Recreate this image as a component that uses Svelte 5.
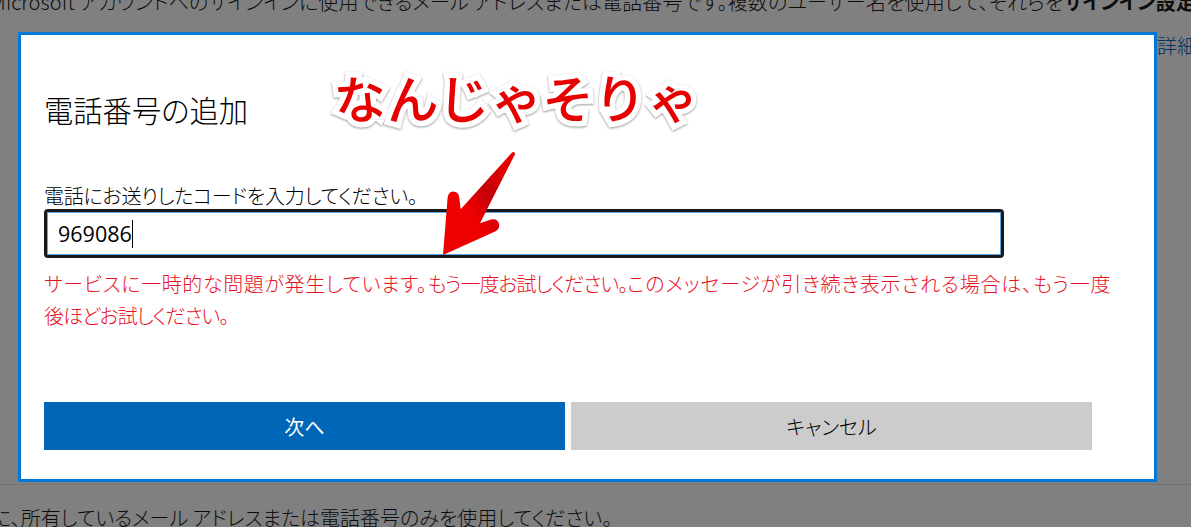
<script>
	const stickerChars = [
		{ ch: 'な', rot: -4 },
		{ ch: 'ん', rot: -3 },
		{ ch: 'じ', rot: 2 },
		{ ch: 'ゃ', rot: -8 },
		{ ch: 'そ', rot: -4 },
		{ ch: 'り', rot: 3 },
		{ ch: 'ゃ', rot: -12 }
	];
</script>

<div class="page">
	<p class="top-line">Microsoft アカウントへのサインインに使用できるメール アドレスまたは電話番号です。複数のユーザー名を使用して、それらを<b>サインイン設定</b></p>
	<div class="middle">
		<div class="dialog">
			<h2>電話番号の追加</h2>
			<label class="field-label" for="code">電話にお送りしたコードを入力してください。</label>
			<div class="input" id="code">969086<span class="caret"></span></div>
			<p class="error"><span class="loose">サービスに一時的な問題が発生しています。</span><span class="tight">もう一度お試しください。</span><span class="wide">このメッセージが引き続き表示される場合は、もう一度</span><span class="tight">後ほどお試しください。</span></p>
			<div class="actions">
				<button class="primary">次へ</button>
				<button class="secondary">キャンセル</button>
			</div>
		</div>
		<a class="more" href="#more">詳細</a>
	</div>
	<p class="bottom-line">に、所有しているメール アドレスまたは電話番号のみを使用してください。</p>

	<div class="sticker">
		{#each stickerChars as c}
			<span style="transform: rotate({c.rot}deg)">{c.ch}</span>
		{/each}
	</div>

	<svg class="arrow" width="90" height="120" viewBox="430 145 90 120">
		<defs>
			<linearGradient id="arrowfill" x1="0" y1="1" x2="1" y2="0">
				<stop offset="0.4" stop-color="#ee0000" />
				<stop offset="0.62" stop-color="#c4000a" />
				<stop offset="0.85" stop-color="#e60000" />
			</linearGradient>
		</defs>
		<path d="M443 255 L447.5 199 Q448 191.5 453 191.5 Q459 191.5 459.3 198 L460.7 209.3 L511.5 153 Q514 151 515 153.5 Q515 155 514 156 L480 223.3 L491 219.6 Q498 218 499.3 225 Q499.5 230 494 232 Z" fill="url(#arrowfill)" />
	</svg>
</div>

<style>
	:global(body) {
		margin: 0;
		background: #808080;
	}

	.page {
		position: relative;
		height: 527px;
		width: 1191px;
		overflow: hidden;
		background: #808080;
		font-family: "Noto Sans CJK JP", sans-serif;
		font-feature-settings: "palt";
		font-weight: 300;
		color: #000;
	}

	.top-line {
		margin: -13px 0 0 -10px;
		height: 45px;
		font-size: 20px;
		line-height: 30px;
		letter-spacing: 0.15px;
		white-space: nowrap;
		color: #0c0c0c;
	}
	.top-line b {
		font-weight: 700;
	}

	.middle {
		display: flex;
		align-items: flex-start;
		height: 450px;
		margin-left: 18px;
	}

	.dialog {
		box-sizing: border-box;
		width: 1139px;
		height: 450px;
		flex: none;
		background: #fff;
		border: 3px solid #0078d7;
		padding: 56px 23px 0;
		display: flex;
		flex-direction: column;
		align-items: flex-start;
	}

	h2 {
		margin: 0;
		font-size: 29.3px;
		font-weight: 300;
		line-height: 36px;
	}

	.field-label {
		margin-top: 55px;
		font-size: 20px;
		line-height: 28px;
		letter-spacing: -0.25px;
	}

	.input {
		box-sizing: border-box;
		width: 960px;
		height: 49px;
		margin-top: -1px;
		border: 3px solid #17191c;
		border-radius: 4px;
		box-shadow: inset 0 0 0 1px #5aa6e6;
		padding-left: 11px;
		display: flex;
		align-items: center;
		font-family: "Open Sans", sans-serif;
		font-weight: 400;
		font-size: 21.5px;
	}

	.caret {
		display: inline-block;
		width: 1px;
		height: 28px;
		background: #000;
	}

	.error {
		width: 1072px;
		margin: 10px 0 0;
		font-size: 20px;
		line-height: 32px;
		color: #e81123;
	}
	.error .loose {
		letter-spacing: 0.6px;
	}
	.error .tight {
		letter-spacing: -1px;
	}
	.error .wide {
		letter-spacing: 0.85px;
	}

	.actions {
		display: flex;
		gap: 6px;
		margin-top: 70px;
	}

	button {
		width: 521px;
		height: 48px;
		border: 0;
		padding: 0;
		font: inherit;
		font-size: 20px;
	}
	.primary {
		background: #0067b8;
		color: #fff;
		font-weight: 400;
	}
	.secondary {
		background: #cccccc;
		color: #000;
	}

	.more {
		font-size: 20px;
		line-height: 28px;
		white-space: nowrap;
		color: #00335c;
		text-decoration: none;
	}

	.bottom-line {
		margin: 2px 0 0;
		padding: 18px 0 0;
		border-top: 1px solid #737373;
		font-size: 20px;
		line-height: 30px;
		white-space: nowrap;
		color: #0c0c0c;
		text-indent: -8px;
	}

	.sticker {
		position: absolute;
		left: 334px;
		top: 64px;
		display: flex;
		font-size: 52px;
		line-height: 66px;
		font-weight: 500;
		font-feature-settings: normal;
		color: #e60000;
		-webkit-text-stroke: 11px #fff;
		paint-order: stroke fill;
		filter: drop-shadow(0 1px 1px #999);
	}
	.sticker span {
		display: block;
	}

	.arrow {
		position: absolute;
		left: 430px;
		top: 145px;
	}
</style>
